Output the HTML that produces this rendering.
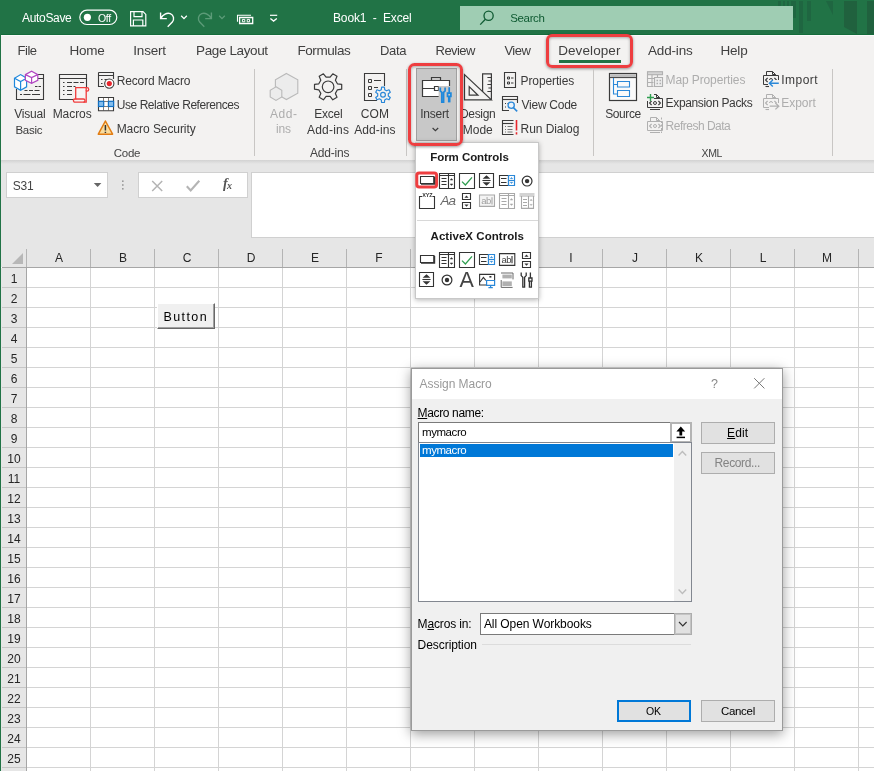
<!DOCTYPE html>
<html><head><meta charset="utf-8"><title>Book1 - Excel</title>
<style>
*{box-sizing:border-box;margin:0;padding:0}
html,body{width:874px;height:771px;overflow:hidden;background:#fff}
body{font-family:"Liberation Sans",sans-serif;font-size:12px;color:#262626;position:relative}
#root{position:absolute;left:0;top:0;width:874px;height:771px;overflow:hidden;will-change:transform}
.a{position:absolute}
.t{position:absolute;white-space:nowrap;line-height:1}
#title{left:0;top:0;width:874px;height:35px;background:#217346}
#tabs{left:0;top:35px;width:874px;height:30px;background:#f3f2f1}
#ribbon{left:0;top:65px;width:874px;height:96px;background:#f3f2f1}
#fbar{left:0;top:161px;width:874px;height:106px;background:#e6e6e6}
#lborder{left:0;top:0;width:1px;height:771px;background:#217346}
.tab{font-size:13px;top:44px;color:#333}
.rl{font-size:12.5px;color:#333}
.gl{font-size:12px;color:#444}
.dis{color:#a6a6a6}
.sep{position:absolute;width:1px;background:#c8c6c4;top:69px;height:87px}
.ch{font-size:12px;top:252px;width:64px;text-align:center;color:#262626}
.rn{font-size:12px;left:2px;width:24px;text-align:center;color:#262626}
.dt{font-size:12px;color:#000}
</style></head><body>
<div id="root">
<div class="a" id="title"></div>
<div class="a" id="tabs"></div>
<div class="a" id="ribbon"></div>
<div class="a" id="fbar"></div>
<!--GRID-->
<svg class="a" style="left:0;top:245px" width="874" height="526" shape-rendering="crispEdges">
<rect x="27" y="23" width="847" height="503" fill="#fff"/>
<rect x="1" y="23" width="25" height="503" fill="#e6e6e6"/>
<path d="M90.5 23V526M154.5 23V526M218.5 23V526M282.5 23V526M346.5 23V526M410.5 23V526M474.5 23V526M538.5 23V526M602.5 23V526M666.5 23V526M730.5 23V526M794.5 23V526M858.5 23V526" stroke="#d4d4d4" stroke-width="1" fill="none"/>
<path d="M27 42.5H874M27 62.5H874M27 82.5H874M27 102.5H874M27 122.5H874M27 142.5H874M27 162.5H874M27 182.5H874M27 202.5H874M27 222.5H874M27 242.5H874M27 262.5H874M27 282.5H874M27 302.5H874M27 322.5H874M27 342.5H874M27 362.5H874M27 382.5H874M27 402.5H874M27 422.5H874M27 442.5H874M27 462.5H874M27 482.5H874M27 502.5H874M27 522.5H874" stroke="#d4d4d4" stroke-width="1" fill="none"/>
<path d="M2 42.5H26M2 62.5H26M2 82.5H26M2 102.5H26M2 122.5H26M2 142.5H26M2 162.5H26M2 182.5H26M2 202.5H26M2 222.5H26M2 242.5H26M2 262.5H26M2 282.5H26M2 302.5H26M2 322.5H26M2 342.5H26M2 362.5H26M2 382.5H26M2 402.5H26M2 422.5H26M2 442.5H26M2 462.5H26M2 482.5H26M2 502.5H26M2 522.5H26" stroke="#c6c6c6" stroke-width="1" fill="none"/>
<path d="M26.5 4V22M90.5 4V22M154.5 4V22M218.5 4V22M282.5 4V22M346.5 4V22M410.5 4V22M474.5 4V22M538.5 4V22M602.5 4V22M666.5 4V22M730.5 4V22M794.5 4V22M858.5 4V22" stroke="#b4b4b4" stroke-width="1" fill="none"/>
<path d="M2 22.5H874" stroke="#a6a6a6" stroke-width="1" fill="none"/>
<path d="M26.5 22V526" stroke="#a6a6a6" stroke-width="1" fill="none"/>
<path d="M23 8V19H12Z" fill="#b7b7b7" shape-rendering="auto"/>
</svg>
<div class="t ch" style="left:27px">A</div>
<div class="t ch" style="left:91px">B</div>
<div class="t ch" style="left:155px">C</div>
<div class="t ch" style="left:219px">D</div>
<div class="t ch" style="left:283px">E</div>
<div class="t ch" style="left:347px">F</div>
<div class="t ch" style="left:411px">G</div>
<div class="t ch" style="left:475px">H</div>
<div class="t ch" style="left:539px">I</div>
<div class="t ch" style="left:603px">J</div>
<div class="t ch" style="left:667px">K</div>
<div class="t ch" style="left:731px">L</div>
<div class="t ch" style="left:795px">M</div>
<div class="t rn" style="top:273px">1</div>
<div class="t rn" style="top:293px">2</div>
<div class="t rn" style="top:313px">3</div>
<div class="t rn" style="top:333px">4</div>
<div class="t rn" style="top:353px">5</div>
<div class="t rn" style="top:373px">6</div>
<div class="t rn" style="top:393px">7</div>
<div class="t rn" style="top:413px">8</div>
<div class="t rn" style="top:433px">9</div>
<div class="t rn" style="top:453px">10</div>
<div class="t rn" style="top:473px">11</div>
<div class="t rn" style="top:493px">12</div>
<div class="t rn" style="top:513px">13</div>
<div class="t rn" style="top:533px">14</div>
<div class="t rn" style="top:553px">15</div>
<div class="t rn" style="top:573px">16</div>
<div class="t rn" style="top:593px">17</div>
<div class="t rn" style="top:613px">18</div>
<div class="t rn" style="top:633px">19</div>
<div class="t rn" style="top:653px">20</div>
<div class="t rn" style="top:673px">21</div>
<div class="t rn" style="top:693px">22</div>
<div class="t rn" style="top:713px">23</div>
<div class="t rn" style="top:733px">24</div>
<div class="t rn" style="top:753px">25</div>
<!--/GRID-->
<!--CONTENT-->
<!--P1-->
<!-- title bar shapes -->
<svg class="a" style="left:776px;top:0" width="98" height="35" shape-rendering="crispEdges" fill="#1f6641">
<rect x="2" y="1" width="3" height="16"/><rect x="7" y="1" width="2" height="16"/><rect x="11" y="1" width="2" height="16"/><rect x="15" y="1" width="5" height="17"/>
<rect x="23" y="1" width="4" height="32"/><rect x="31" y="1" width="4" height="20"/>
<path d="M50 1h7v14z" shape-rendering="auto"/>
<path d="M68 1h13v33l-13-7z" shape-rendering="auto" fill="#20613e"/>
<rect x="91" y="1" width="7" height="34" fill="#20613e"/>
</svg>
<div class="a" style="left:460px;top:6px;width:333px;height:24px;background:#9fcdb3"></div>
<svg class="a" style="left:0;top:0" width="300" height="35" fill="none" stroke="#fff" stroke-width="1.2">
<!-- toggle -->
<rect x="79.8" y="10.1" width="37" height="14.4" rx="7.2"/>
<circle cx="87.4" cy="17.3" r="3.6" fill="#fff" stroke="none"/>
<!-- save -->
<path d="M130.6 11.6h12.4l2.8 2.8v11.4h-15.2z M134 11.6v5h8v-5 M133.4 25.8v-5.8h9.4v5.8"/>
<!-- undo -->
<path d="M160.6 12.4v6.2h6.2 M160.9 18.3c2-3.6 6-6 9.4-4.6c3.6 1.6 4.2 5.6 2 8.4l-4.6 4.6" stroke-width="1.4"/>
<path d="M181.2 15.8l2.8 2.8l2.8-2.8" stroke-width="1.3"/>
<!-- redo faded -->
<g stroke="#5c9b78"><path d="M211.4 12.4v6.2h-6.2 M211.1 18.3c-2-3.6-6-6-9.4-4.6c-3.6 1.6-4.2 5.6-2 8.4l4.6 4.6" stroke-width="1.4"/>
<path d="M219.2 15.8l2.8 2.8l2.8-2.8" stroke-width="1.3"/></g>
<!-- form icon -->
<path d="M237.5 21.8V15.3H251" stroke-width="1.1"/><path d="M239.6 17.5H252.7V23.5H239.6Z" stroke-width="1.3"/><path d="M242.4 19.4h2.4v2.4h-2.4zM247.2 19.4h2.4v2.4h-2.4z" stroke-width="1"/>
<!-- customize -->
<path d="M270 15.3h7.2" stroke-width="1.2"/><path d="M270.4 18.4l3.2 2.7l3.2-2.7" stroke-width="1.3"/>
</svg>
<svg class="a" style="left:478px;top:9px" width="18" height="18" fill="none" stroke="#0f5a32" stroke-width="1.3"><circle cx="10.6" cy="6.8" r="4.6"/><path d="M7.4 10.2L2.2 15.6"/></svg>
<div class="a" style="left:0;top:34px;width:874px;height:1px;background:#146c3b"></div>
<div class="a" style="left:1px;top:35px;width:873px;height:1px;background:#fbfbfb"></div>
<!-- developer underline + red box -->
<div class="a" style="left:559px;top:60px;width:62px;height:3px;background:#217346"></div>
<div class="a" style="left:546.2px;top:33.8px;width:86.8px;height:34px;border:3px solid #ee3e40;border-radius:6px;box-shadow:0 1px 3px rgba(0,0,0,.4),inset 0 1px 3px rgba(0,0,0,.3)"></div>
<!-- ribbon separators -->
<div class="sep" style="left:254px"></div><div class="sep" style="left:406px"></div><div class="sep" style="left:593px"></div><div class="sep" style="left:832px"></div>
<!-- ribbon bottom shadow -->
<div class="a" style="left:0;top:160px;width:874px;height:4px;background:linear-gradient(#d2d2d2,#e6e6e6)"></div>
<!-- insert button pressed -->
<div class="a" style="left:416px;top:68px;width:41px;height:73px;background:#c8c8c8;border:1px solid #a0a0a0"></div>
<!-- formula bar -->
<div class="a" style="left:6px;top:172px;width:102px;height:26px;background:#fff;border:1px solid #d0d0d0"></div>
<svg class="a" style="left:90px;top:178px" width="16" height="14"><path d="M3.8 5h7.6l-3.8 4z" fill="#666"/></svg>
<svg class="a" style="left:119px;top:178px" width="8" height="14" fill="#9a9a9a"><rect x="3" y="2.4" width="1.6" height="1.6"/><rect x="3" y="6.2" width="1.6" height="1.6"/><rect x="3" y="10" width="1.6" height="1.6"/></svg>
<div class="a" style="left:138px;top:172px;width:110px;height:26px;background:#fff;border:1px solid #d0d0d0"></div>
<svg class="a" style="left:138px;top:172px" width="110" height="26" fill="none" stroke="#b4b4b4" stroke-width="1.5"><path d="M14.2 9l10 10M24.2 9l-10 10"/><path d="M48.8 14.2l3.9 4.2l8.6-9.6" stroke-width="2.1"/></svg>
<div class="t" style="left:223px;top:176.5px;font-family:'Liberation Serif',serif;font-style:italic;font-weight:bold;font-size:14px;color:#555;letter-spacing:-0.6px">f<span style="font-size:10px;position:relative;top:1.5px">x</span></div>
<div class="a" style="left:251px;top:172px;width:623px;height:66px;background:#fff;border:1px solid #d0d0d0;border-right:none"></div>

<!--/P1-->
<!--TEXT-->
<div class="t" style="left:22.0px;top:12.00px;font-size:12px;color:#fff;letter-spacing:-0.32px;">AutoSave</div>
<div class="t" style="left:97.9px;top:13.00px;font-size:10.5px;color:#fff;letter-spacing:-0.29px;">Off</div>
<div class="t" style="left:333.0px;top:12.00px;font-size:12px;color:#fff;letter-spacing:-0.14px;white-space:pre;">Book1  -  Excel</div>
<div class="t" style="left:510.2px;top:13.00px;font-size:11.5px;color:#0f5a32;letter-spacing:-0.34px;">Search</div>
<div class="t" style="left:17.4px;top:44.00px;font-size:13.0px;color:#404040;letter-spacing:-0.42px;">File</div>
<div class="t" style="left:69.4px;top:44.00px;font-size:13.5px;color:#404040;letter-spacing:-0.19px;">Home</div>
<div class="t" style="left:133.3px;top:44.00px;font-size:13.5px;color:#404040;letter-spacing:-0.21px;">Insert</div>
<div class="t" style="left:196.1px;top:44.00px;font-size:13.5px;color:#404040;letter-spacing:-0.39px;">Page Layout</div>
<div class="t" style="left:297.4px;top:44.00px;font-size:13.5px;color:#404040;letter-spacing:-0.41px;">Formulas</div>
<div class="t" style="left:379.9px;top:44.00px;font-size:13.0px;color:#404040;letter-spacing:-0.28px;">Data</div>
<div class="t" style="left:435.6px;top:44.00px;font-size:13.0px;color:#404040;letter-spacing:-0.56px;">Review</div>
<div class="t" style="left:504.4px;top:44.00px;font-size:13.0px;color:#404040;letter-spacing:-0.52px;">View</div>
<div class="t" style="left:558.2px;top:44.00px;font-size:13.5px;color:#404040;letter-spacing:0.09px;">Developer</div>
<div class="t" style="left:648.0px;top:44.00px;font-size:13.5px;color:#404040;letter-spacing:-0.17px;">Add-ins</div>
<div class="t" style="left:720.4px;top:44.00px;font-size:13.5px;color:#404040;letter-spacing:-0.14px;">Help</div>
<div class="t" style="left:14.3px;top:108.00px;font-size:12px;color:#3a3a3a;letter-spacing:-0.23px;">Visual</div>
<div class="t" style="left:15.4px;top:125.00px;font-size:11.5px;color:#3a3a3a;letter-spacing:-0.23px;">Basic</div>
<div class="t" style="left:52.7px;top:108.00px;font-size:12px;color:#3a3a3a;letter-spacing:-0.06px;">Macros</div>
<div class="t" style="left:116.7px;top:75.00px;font-size:12px;color:#3a3a3a;letter-spacing:-0.15px;">Record Macro</div>
<div class="t" style="left:116.8px;top:99.00px;font-size:12px;color:#3a3a3a;letter-spacing:-0.46px;">Use Relative References</div>
<div class="t" style="left:116.7px;top:123.00px;font-size:12px;color:#3a3a3a;letter-spacing:-0.08px;">Macro Security</div>
<div class="t" style="left:113.7px;top:148.00px;font-size:11.5px;color:#444;letter-spacing:-0.25px;">Code</div>
<div class="t" style="left:270.0px;top:108.00px;font-size:12px;color:#adadad;letter-spacing:0.59px;">Add-</div>
<div class="t" style="left:276.0px;top:123.00px;font-size:12px;color:#adadad;letter-spacing:-0.23px;">ins</div>
<div class="t" style="left:314.3px;top:108.00px;font-size:12px;color:#3a3a3a;letter-spacing:-0.24px;">Excel</div>
<div class="t" style="left:307.0px;top:124.00px;font-size:12px;color:#3a3a3a;letter-spacing:0.22px;">Add-ins</div>
<div class="t" style="left:360.8px;top:108.00px;font-size:12px;color:#3a3a3a;letter-spacing:0.07px;">COM</div>
<div class="t" style="left:354.3px;top:124.00px;font-size:12px;color:#3a3a3a;letter-spacing:0.07px;">Add-ins</div>
<div class="t" style="left:310.0px;top:147.00px;font-size:12px;color:#444;letter-spacing:-0.21px;">Add-ins</div>
<div class="t" style="left:420.3px;top:108.00px;font-size:12px;color:#3a3a3a;letter-spacing:-0.26px;">Insert</div>
<div class="t" style="left:460.0px;top:108.00px;font-size:12px;color:#3a3a3a;letter-spacing:-0.33px;">Design</div>
<div class="t" style="left:462.7px;top:124.00px;font-size:12px;color:#3a3a3a;letter-spacing:0.01px;">Mode</div>
<div class="t" style="left:520.6px;top:75.00px;font-size:12px;color:#3a3a3a;letter-spacing:-0.12px;">Properties</div>
<div class="t" style="left:521.6px;top:99.00px;font-size:12px;color:#3a3a3a;letter-spacing:-0.27px;">View Code</div>
<div class="t" style="left:520.6px;top:123.00px;font-size:12px;color:#3a3a3a;letter-spacing:-0.07px;">Run Dialog</div>
<div class="t" style="left:605.2px;top:108.00px;font-size:12px;color:#3a3a3a;letter-spacing:-0.41px;">Source</div>
<div class="t" style="left:665.6px;top:74.00px;font-size:12px;color:#adadad;letter-spacing:-0.12px;">Map Properties</div>
<div class="t" style="left:665.6px;top:97.00px;font-size:12px;color:#3a3a3a;letter-spacing:-0.35px;">Expansion Packs</div>
<div class="t" style="left:665.6px;top:120.00px;font-size:12px;color:#adadad;letter-spacing:-0.50px;">Refresh Data</div>
<div class="t" style="left:781.2px;top:74.00px;font-size:12px;color:#3a3a3a;letter-spacing:0.50px;">Import</div>
<div class="t" style="left:781.3px;top:97.00px;font-size:12px;color:#adadad;letter-spacing:-0.05px;">Export</div>
<div class="t" style="left:701.6px;top:148.00px;font-size:10.5px;color:#444;letter-spacing:-0.43px;">XML</div>
<div class="t" style="left:12.7px;top:180.00px;font-size:12px;color:#444;letter-spacing:-0.24px;">S31</div>
<!--/TEXT-->
<!--ICONS-->
<svg class="a" style="left:0;top:0" width="874" height="165" fill="none" stroke-width="1.1" stroke-linejoin="miter">
<g stroke="#3b3b3b"><path d="M37 74.5H43.5V99.5H16.5V89"/><path d="M38 78.5H43.5M35 86.5h2.5m1 0h2.5M24.5 90.5h3m1.5 0h4m1.5 0h5M20 94.5h2m1.5 0h7m1.5 0h8" /></g>
<g stroke="#1e88dc" fill="#fff" stroke-width="1.2"><path d="M14.5 78.2L20.6 74.6L26.6 78.2V86.8L20.6 90.3L14.5 86.8Z"/><path d="M14.5 78.2L20.6 81.6L26.6 78.2M20.6 81.6V90.3" fill="none"/></g>
<g stroke="#b146c2" fill="#fff" stroke-width="1.2"><path d="M25.4 74.6L31.6 71.3L37.8 74.6V80.4L31.6 83.4L25.4 80.4Z"/><path d="M25.4 74.6L31.6 77.6L37.8 74.6M31.6 77.6V83.4" fill="none"/></g>
<g stroke="#3b3b3b"><path d="M74 99.5H59.5V74.5H86.5V87.4 M59.5 78.5H86.5"/><path d="M63 82.5h1.5m2.5 0h5m1.5 0h5m1.5 0h4M63 86.5h1.5m2.5 0h5m1.5 0h2M63 90.5h1.5m2.5 0h5M63 94.5h1.5m2.5 0h5"/></g>
<path d="M75.7 87.7H87a1.7 1.7 0 0 1 0 3.4H86.2V102.2H75a1.6 1.6 0 0 1 0-3.2H75.7Z" stroke="#f03c3c" fill="#f7f5f4" stroke-width="1.3"/><path d="M75.7 99H83.4a1.6 1.6 0 0 1 0 3.2M86.2 91.1V87.7" stroke="#f03c3c" stroke-width="1.3"/>
<g stroke="#3b3b3b"><path d="M98.5 72.5H113.5V79 M98.5 72.5V86.5H104 M98.5 75.5H113.5"/><path d="M101 79.5h1.5m2 0h3M101 83.5h1.5"/><circle cx="109.3" cy="83.6" r="4.6" fill="#fff"/></g><circle cx="109.3" cy="83.6" r="2.6" fill="#e8262d"/>
<rect x="98.5" y="97.5" width="15" height="13.2" fill="#fff"/>
<path d="M98.5 101.5h15M98.5 106.5h15M103.5 97.5v13M108.5 97.5v13" stroke="#7a7068" stroke-width="0.9"/>
<path d="M98.5 97.5H113.5V110.7H98.5Z" stroke="#3b3b3b" stroke-width="1.1"/>
<rect x="98.5" y="101.3" width="5.2" height="5.2" fill="#84bdec" stroke="#1170c4" stroke-width="1.2"/><rect x="108.4" y="101.3" width="5.2" height="5.2" fill="#84bdec" stroke="#1170c4" stroke-width="1.2"/>
<path d="M105.4 121L112.6 134.2H98.3Z" fill="#f9dc9e" stroke="#e27c12" stroke-width="1.5" stroke-linejoin="round"/><path d="M105.4 125v5.6M105.4 131.8v1.2" stroke="#333" stroke-width="1.5"/>
<path d="M286.4 73.4L297.8 79.8V93.2L286.4 99.6L275.4 93.2V79.8Z" fill="#ececec" stroke="#b9b9b9"/><path d="M276 86.8L281.8 90.2V97L276 100.4L270.2 97V90.2Z" fill="#ececec" stroke="#b9b9b9"/>
<path d="M341.7 84.4L341.7 89.2L337.4 89.8L335.4 93.4L337.0 97.3L332.8 99.8L330.1 96.4L326.1 96.4L323.4 99.8L319.2 97.3L320.8 93.4L318.8 89.8L314.5 89.2L314.5 84.4L318.8 83.8L320.8 80.2L319.2 76.3L323.4 73.8L326.1 77.2L330.1 77.2L332.8 73.8L337.0 76.3L335.4 80.2L337.4 83.8Z" stroke="#3b3b3b" stroke-width="1.2" stroke-linejoin="round"/><circle cx="328.1" cy="86.8" r="5.8" stroke="#3b3b3b" stroke-width="1.2"/>
<g stroke="#3b3b3b"><path d="M377 100.5H364.5V73.5H384.5V86"/><path d="M368.5 79.5h3v3h-3zM368.5 86.5h3v3h-3zM368.5 93.5h3v3h-3z" stroke-width="1"/><path d="M374 80.5h7M374 87.5h4"/></g>
<path d="M390.3 97.4L389.0 99.8L386.6 98.8L384.7 99.9L384.4 102.5L381.6 102.5L381.3 99.9L379.4 98.8L377.0 99.8L375.7 97.4L377.7 95.9L377.7 93.7L375.7 92.2L377.0 89.8L379.4 90.8L381.3 89.7L381.6 87.1L384.4 87.1L384.7 89.7L386.6 90.8L389.0 89.8L390.3 92.2L388.3 93.7L388.3 95.9Z" stroke="#2b88d8" fill="#f3f2f1" stroke-width="1.2" stroke-linejoin="round"/><circle cx="383" cy="94.8" r="2.4" stroke="#2b88d8" stroke-width="1.2"/>
<g stroke="#3b3b3b" stroke-width="1.2"><path d="M422.5 80.5H449.5V96.5H422.5Z" fill="#fff"/><path d="M431.5 80.5V77.5H440.5V80.5"/><path d="M422.5 88.5H434.5M438.5 88.5H449.5"/><path d="M434.5 86.5h4v4h-4z" fill="#fff"/></g>
<rect x="438.6" y="86" width="13.6" height="17" fill="#c8c8c8"/>
<g stroke="#1e88dc" stroke-width="1.7"><path d="M440.3 87.4v3.4l1.5 1.5v9.8h1.8v-9.8l1.5-1.5v-3.4" /><path d="M449.2 87.2v5.8M447.5 93.2h3.4v3.2h-3.4z" stroke-width="1.7"/><path d="M449.2 96.4v6" stroke-width="2.6"/></g>
<path d="M432.6 128l2.8 2.6l2.8-2.6" stroke="#3b3b3b" stroke-width="1.2"/>
<g stroke="#3b3b3b" stroke-width="1.2"><path d="M464.5 74.6V99.8H491.4Z"/><path d="M469.2 86.6V95.2H478Z"/><path d="M482.6 92V73.8H491.4V99.8"/><path d="M487.4 77.5h4M488.4 81h3M487.4 84.5h4M488.4 88h3M487.4 91.5h4" stroke-width="1"/></g>
<g stroke="#3b3b3b"><path d="M504.5 72.5H515.5V87.5H504.5Z"/><path d="M507.5 77h2v2h-2zM507.5 82h2v2h-2z" stroke-width="1"/><path d="M511 78h2.5M511 83h2.5"/></g>
<g stroke="#3b3b3b"><path d="M509 110.5H502.5V96.5H517.5V103"/><path d="M502.5 99.5H517.5"/><path d="M505 103.5h1m1.5 0h1M505 107h1" stroke-width="1"/></g><circle cx="511.2" cy="105.2" r="3.1" stroke="#2b88d8" stroke-width="1.3" fill="#eaf3fb"/><path d="M513.4 107.6L517.2 111.4" stroke="#2b88d8" stroke-width="1.5"/>
<g stroke="#3b3b3b"><path d="M513.5 120.5H502.5V134.5H513.5"/><path d="M502.5 123.5H513.5"/><path d="M505 126.5h1m1.5 0h5M505 129.5h1m1.5 0h5M505 132h1m1.5 0h5" stroke-width="0.9" stroke="#666"/></g><path d="M516.5 120v10.4M516.5 132.2v2.2" stroke="#e8262d" stroke-width="1.6"/>
<rect x="609.5" y="73.5" width="27" height="27" fill="#fafafa" stroke="#3b3b3b" stroke-width="1.2"/><rect x="610.2" y="74.2" width="25.6" height="3" fill="#bdbdbd"/><path d="M609.5 77.6H636.5" stroke="#3b3b3b" stroke-width="1"/>
<g stroke="#2b88d8" stroke-width="1.1"><path d="M613.5 78V94H617.5M613.5 84.5H617.5"/><path d="M617.5 81.5H629.5V87H617.5ZM617.5 90.5H629.5V96.5H617.5Z"/></g>
<g stroke="#b0b0b0"><rect x="647.5" y="71.7" width="15" height="3" fill="#d4d4d4"/><path d="M647.5 74.7V86.5H653.5 M647.5 78.5H655M647.5 82.5H653.5M652 74.7V86.5M657.5 74.7V77"/><path d="M654.5 77.5H662.5V86.5H654.5Z" fill="#eee"/><path d="M656.5 80.5h1.5m1.5 0h1.5M656.5 83.5h1.5m1.5 0h1.5" stroke-width="1.3"/></g>
<g stroke="#3b3b3b" stroke-width="1"><path d="M650.5 98.5V94.5H656.5L659.5 97.5V98.5 M656.5 94.5V97.5H659.5" /><path d="M647.5 98.5H662.5V107.5H647.5Z"/><path d="M651.6 100.8L649.6 103L651.6 105.2 M658.4 100.8L660.4 103L658.4 105.2" stroke-width="1.2"/><circle cx="655" cy="103" r="1.5" stroke-width="1"/><path d="M650 109.5H660"/></g>
<rect x="646" y="93" width="8" height="8" fill="#f3f2f1"/><path d="M650.5 94V101M647 97.5H654" stroke="#2e9e4f" stroke-width="1.4"/>
<g stroke="#b0b0b0" stroke-width="1"><path d="M650.5 121.5V117.5H656.5L659.5 120.5V121.5 M656.5 117.5V120.5H659.5" /><path d="M647.5 121.5H662.5V130.5H647.5Z"/><path d="M651.6 123.8L649.6 126L651.6 128.2 M658.4 123.8L660.4 126L658.4 128.2" stroke-width="1.2"/><circle cx="655" cy="126" r="1.5" stroke-width="1"/><path d="M650 132.5H660"/><path d="M661.5 117.5V133" stroke="#b0b0b0" stroke-dasharray="2 1.5"/></g>
<g stroke="#3b3b3b" stroke-width="1"><path d="M766.5 75.5V71.5H772.5L775.5 74.5V75.5 M772.5 71.5V74.5H775.5" /><path d="M763.5 75.5H778.5V84.5H763.5Z"/><path d="M767.6 77.8L765.6 80L767.6 82.2 M774.4 77.8L776.4 80L774.4 82.2" stroke-width="1.2"/><circle cx="771" cy="80" r="1.5" stroke-width="1"/><path d="M766 86.5H776"/></g>
<rect x="768" y="80" width="12" height="7" fill="#f3f2f1"/><path d="M778.8 83.2H769.6M772.8 80L769.4 83.2L772.8 86.4" stroke="#2b88d8" stroke-width="1.4"/><path d="M765.5 86.5H769" stroke="#3b3b3b"/>
<g stroke="#b0b0b0" stroke-width="1"><path d="M766.5 98.5V94.5H772.5L775.5 97.5V98.5 M772.5 94.5V97.5H775.5" /><path d="M763.5 98.5H778.5V107.5H763.5Z"/><path d="M767.6 100.8L765.6 103L767.6 105.2 M774.4 100.8L776.4 103L774.4 105.2" stroke-width="1.2"/><circle cx="771" cy="103" r="1.5" stroke-width="1"/><path d="M766 109.5H776"/></g>
<rect x="769" y="103" width="11" height="7" fill="#f3f2f1"/><path d="M769.6 106.2H778.6M775.4 103L778.8 106.2L775.4 109.4" stroke="#b0b0b0" stroke-width="1.3"/><path d="M765.5 109.5H769" stroke="#b0b0b0"/>
</svg>
<!--/ICONS-->
<!--PANEL-->
<div class="a" style="left:415px;top:142px;width:124px;height:157px;background:#fff;border:1px solid #c8c8c8;box-shadow:0 1px 5px rgba(0,0,0,.3)"></div>
<div class="a" style="left:417px;top:220px;width:120.5px;height:1px;background:#d8d8d8"></div>
<div class="t" style="left:430.2px;top:152.00px;font-size:11.5px;color:#1a1a1a;letter-spacing:-0.05px;font-weight:bold;">Form Controls</div>
<div class="t" style="left:430.6px;top:231.00px;font-size:11.5px;color:#1a1a1a;letter-spacing:0.04px;font-weight:bold;">ActiveX Controls</div>
<svg class="a" style="left:0;top:0" width="874" height="310" fill="none" stroke-width="1.1">
<rect x="416.8" y="172.9" width="19.8" height="14" rx="2.4" stroke="#ee3e40" stroke-width="3" fill="#fff"/>
<g stroke="#333"><path d="M420.5 176.5H434V183.5H420.5Z" stroke-width="1.1"/><path d="M421 183.8H434.3V177" stroke-width="1.8"/></g>
<g stroke="#333"><path d="M439.5 173.5H454.5V188.5H439.5Z M448.5 173.5V188.5 M439.5 175.5H454.5" /><path d="M441.5 178.5h5M441.5 181.5h5M441.5 184.5h5"/><path d="M450.3 180l1.2-1.4l1.2 1.4zM450.3 184l1.2 1.4l1.2-1.4z" fill="#333" stroke-width="0.6"/></g>
<path d="M459.5 173.5H474.5V188.5H459.5Z" stroke="#333"/><path d="M462 181.6L465.4 185L472 177.4" stroke="#2e9e4f" stroke-width="1.3"/>
<path d="M479.5 173.5H493.5V187.5H479.5Z" stroke="#333"/><path d="M482.4 180.5H490.6" stroke="#333"/><path d="M482.6 178.8L486.5 175.2L490.4 178.8ZM482.6 182.2L486.5 185.8L490.4 182.2Z" fill="#333"/>
<path d="M499.5 175.5H508.5V185.5H499.5Z M501 178.5h5.5M501 182.5h5.5" stroke="#333"/><path d="M508.5 175.5H514.5V185.5H508.5Z M508.5 180.5H514.5" stroke="#2b88d8" stroke-width="1.2"/><path d="M510.3 178.8l1.2-1.4l1.2 1.4zM510.3 182.2l1.2 1.4l1.2-1.4z" fill="#2b88d8" stroke="#2b88d8" stroke-width="0.5"/>
<circle cx="527.1" cy="181.1" r="4.9" stroke="#333" stroke-width="1.2"/><circle cx="527.1" cy="181.1" r="2.2" fill="#333"/>
<path d="M422 196.5H419.5V208.5H434.5V196.5H432.5" stroke="#333"/>
<path d="M462.5 193.5H470.5V199.5H462.5ZM462.5 202.5H470.5V208.5H462.5Z" stroke="#333"/><path d="M464.4 197.8L466.5 195.4L468.6 197.8ZM464.4 204.4L466.5 206.8L468.6 204.4Z" fill="#333"/>
<path d="M479.5 195H494.5V206.4H479.5Z" stroke="#a8a8a8" fill="#f4f4f4"/><path d="M492 197.2V204.4" stroke="#a8a8a8"/>
<g stroke="#a8a8a8"><path d="M499.5 193.5H514.5V208.5H499.5Z M508.5 193.5V208.5 M499.5 195.5H514.5" /><path d="M501.5 198.5h5M501.5 201.5h5M501.5 204.5h5"/><path d="M510.3 200l1.2-1.4l1.2 1.4zM510.3 204l1.2 1.4l1.2-1.4z" fill="#a8a8a8" stroke-width="0.6"/></g>
<g stroke="#a8a8a8"><path d="M519.5 194H534.5M519.5 196H534.5M521.5 196V208.4H533.5V196M528.5 196V208.4"/><path d="M523 199.5h4M523 202.5h4M523 205.5h4"/><path d="M530 200.4l1.1-1.2l1.1 1.2zM530 204.4l1.1 1.2l1.1-1.2z" fill="#a8a8a8" stroke-width="0.5"/></g>
<g stroke="#333"><path d="M420.5 255.5H434V262.5H420.5Z" stroke-width="1.1"/><path d="M421 262.8H434.3V256" stroke-width="1.8"/></g>
<g stroke="#333"><path d="M439.5 252.5H454.5V267.5H439.5Z M448.5 252.5V267.5 M439.5 254.5H454.5" /><path d="M441.5 257.5h5M441.5 260.5h5M441.5 263.5h5"/><path d="M450.3 259l1.2-1.4l1.2 1.4zM450.3 263l1.2 1.4l1.2-1.4z" fill="#333" stroke-width="0.6"/></g>
<path d="M459.5 252.5H474.5V267.5H459.5Z" stroke="#333"/><path d="M462 260.6L465.4 264L472 256.4" stroke="#2e9e4f" stroke-width="1.3"/>
<path d="M479.5 254.5H488.5V264.5H479.5Z M481 257.5h5.5M481 261.5h5.5" stroke="#333"/><path d="M488.5 254.5H494.5V264.5H488.5Z M488.5 259.5H494.5" stroke="#2b88d8" stroke-width="1.2"/><path d="M490.3 257.8l1.2-1.4l1.2 1.4zM490.3 261.2l1.2 1.4l1.2-1.4z" fill="#2b88d8" stroke="#2b88d8" stroke-width="0.5"/>
<path d="M499.5 253.6H514.8V265.4H499.5Z" stroke="#333"/><path d="M512 256V263.2" stroke="#333"/>
<path d="M522.5 252.5H530.5V258.5H522.5ZM522.5 261.5H530.5V267.5H522.5Z" stroke="#333"/><path d="M524.4 256.8L526.5 254.4L528.6 256.8ZM524.4 263.4L526.5 265.8L528.6 263.4Z" fill="#333"/>
<path d="M419.5 272.5H433.5V286.5H419.5Z" stroke="#333"/><path d="M422.4 279.5H430.6" stroke="#333"/><path d="M422.6 277.8L426.5 274.2L430.4 277.8ZM422.6 281.2L426.5 284.8L430.4 281.2Z" fill="#333"/>
<circle cx="447" cy="280" r="4.9" stroke="#333" stroke-width="1.2"/><circle cx="447" cy="280" r="2.2" fill="#333"/>
<path d="M486 285H479.6V274.4H494.6V280" stroke="#333"/><path d="M480 282l3.4-4.6l2.4 3" stroke="#333"/><rect x="489.4" y="276" width="2" height="1.6" fill="#333"/>
<path d="M486.6 280.5H494.6V285.4H486.6Z M490.6 285.4V287.2M488.4 287.6H492.8" stroke="#2b88d8" stroke-width="1.2" fill="#fff"/>
<rect x="502.4" y="274.6" width="9.4" height="3.8" fill="#b0b0b0"/><rect x="502.4" y="281.4" width="9.4" height="4.6" fill="#b0b0b0"/>
<path d="M501 273H513V279.4 M501.2 280V287.4H512.6" stroke="#6a6a6a" stroke-width="1"/>
<g stroke="#333" stroke-width="1.3"><path d="M521.2 272.6v3l1.6 1.6v10h1.8v-10l1.6-1.6v-3"/><path d="M530.4 272.4v5.4M528.8 278h3.2v3.2h-3.2zM529.4 281.4v5.8h2v-5.8" /></g>
</svg>
<div class="t" style="left:422.2px;top:193px;font-size:5.5px;font-weight:bold;color:#333;letter-spacing:-0.1px">XYZ</div>
<div class="t" style="left:440.5px;top:194.2px;font-size:13.5px;font-style:italic;color:#6a6a6a;letter-spacing:-0.9px">Aa</div>
<div class="t" style="left:481.2px;top:196.2px;font-size:9.5px;color:#a0a0a0;letter-spacing:-0.4px">ab</div>
<div class="t" style="left:501.4px;top:254.8px;font-size:9.5px;color:#444;letter-spacing:-0.4px">ab</div>
<div class="t" style="left:459.4px;top:270px;font-size:21.5px;color:#444;">A</div>
<div class="a" style="left:408.4px;top:63px;width:54.6px;height:83px;border:3.2px solid #ee3e40;border-radius:6.5px;box-shadow:0 1px 3px rgba(0,0,0,.4),inset 0 1px 3px rgba(0,0,0,.3)"></div>
<!--/PANEL-->
<!--DIALOG-->
<div class="a" style="left:156.5px;top:303px;width:58.5px;height:25.5px;background:#f0f0f0;border-top:1px solid #fff;border-left:1px solid #fff;border-right:1px solid #696969;border-bottom:1px solid #696969;box-shadow:inset -1px -1px 0 #a0a0a0"></div>
<div class="t" style="left:163.5px;top:311.00px;font-size:12.5px;color:#000;letter-spacing:1.39px;">Button</div>
<div class="a" style="left:411px;top:368px;width:371.5px;height:362.5px;background:#f0f0f0;border:1px solid #9a9a9a;box-shadow:0 3px 12px rgba(0,0,0,.4)"></div>
<div class="a" style="left:412px;top:369px;width:369.5px;height:30px;background:#fff"></div>
<div class="t" style="left:419.6px;top:378.00px;font-size:12px;color:#999;letter-spacing:-0.05px;">Assign Macro</div>
<div class="t" style="left:711.1px;top:378.00px;font-size:12.5px;color:#888;">?</div>
<svg class="a" style="left:750px;top:374px" width="20" height="20" fill="none" stroke="#777" stroke-width="1"><path d="M4.2 4.2L14.4 14.4M14.4 4.2L4.2 14.4"/></svg>
<div class="t" style="left:417.6px;top:407.00px;font-size:12px;color:#000;letter-spacing:-0.36px;"><u>M</u>acro name:</div>
<div class="a" style="left:418px;top:422px;width:273.5px;height:20.5px;background:#fff;border:1px solid #7a7a7a"></div>
<div class="a" style="left:670px;top:422px;width:21.5px;height:20.5px;background:#fff;border:2px solid #b4b4b4"></div>
<svg class="a" style="left:672px;top:424px" width="18" height="17"><path d="M8.8 2.6L4.4 7.6H7.4V11.6H10.2V7.6H13.2Z" fill="#000"/><path d="M4.6 13.4H13" stroke="#000" stroke-width="1.5"/></svg>
<div class="t" style="left:422.0px;top:427.00px;font-size:11.5px;color:#000;letter-spacing:-0.43px;">mymacro</div>
<div class="a" style="left:418px;top:442px;width:273.5px;height:160px;background:#fff;border:1px solid #828790"></div>
<div class="a" style="left:420px;top:444px;width:252.8px;height:13px;background:#0078d7"></div>
<div class="t" style="left:422.0px;top:445.00px;font-size:11.5px;color:#fff;letter-spacing:-0.43px;">mymacro</div>
<div class="a" style="left:673.5px;top:443px;width:17px;height:158px;background:#f0f0f0"></div>
<svg class="a" style="left:673.5px;top:443px" width="17" height="158" fill="none" stroke="#bdbdbd" stroke-width="1.4"><path d="M4.6 12.4L8.4 8.6L12.2 12.4M4.6 146.6L8.4 150.4L12.2 146.6"/></svg>
<div class="a" style="left:701px;top:422px;width:74px;height:22px;background:#e1e1e1;border:1px solid #adadad"></div>
<div class="t" style="left:727.1px;top:427.00px;font-size:12px;color:#000;letter-spacing:0.07px;"><u>E</u>dit</div>
<div class="a" style="left:701px;top:452px;width:74px;height:22px;background:#e1e1e1;border:1px solid #adadad"></div>
<div class="t" style="left:714.5px;top:457.00px;font-size:12px;color:#838383;letter-spacing:-0.35px;">Record...</div>
<div class="t" style="left:417.6px;top:618.00px;font-size:12px;color:#000;letter-spacing:-0.16px;">M<u>a</u>cros in:</div>
<div class="a" style="left:480px;top:613px;width:211.5px;height:21.5px;background:#fff;border:1px solid #7a7a7a"></div>
<div class="a" style="left:674px;top:613px;width:17.5px;height:21.5px;background:#e1e1e1;border:1px solid #adadad;box-shadow:inset 0 0 0 1px #c4c4c4"></div>
<svg class="a" style="left:674px;top:613px" width="18" height="22" fill="none" stroke="#333" stroke-width="1.2"><path d="M5 9L8.8 12.8L12.6 9"/></svg>
<div class="t" style="left:483.9px;top:618.00px;font-size:12px;color:#000;letter-spacing:-0.07px;">All Open Workbooks</div>
<div class="t" style="left:417.6px;top:639.00px;font-size:12px;color:#000;letter-spacing:-0.06px;">Description</div>
<div class="a" style="left:482px;top:644px;width:209px;height:1px;background:#dcdcdc"></div>
<div class="a" style="left:617px;top:700px;width:74px;height:22px;background:#e1e1e1;border:2px solid #0078d7"></div>
<div class="t" style="left:646.0px;top:706.00px;font-size:10.5px;color:#000;letter-spacing:-0.15px;">OK</div>
<div class="a" style="left:701px;top:700px;width:74px;height:22px;background:#e1e1e1;border:1px solid #adadad"></div>
<div class="t" style="left:720.9px;top:706.00px;font-size:11.5px;color:#000;letter-spacing:-0.30px;">Cancel</div>
<!--/DIALOG-->
<div class="a" id="lborder"></div>
</div>
</body></html>
